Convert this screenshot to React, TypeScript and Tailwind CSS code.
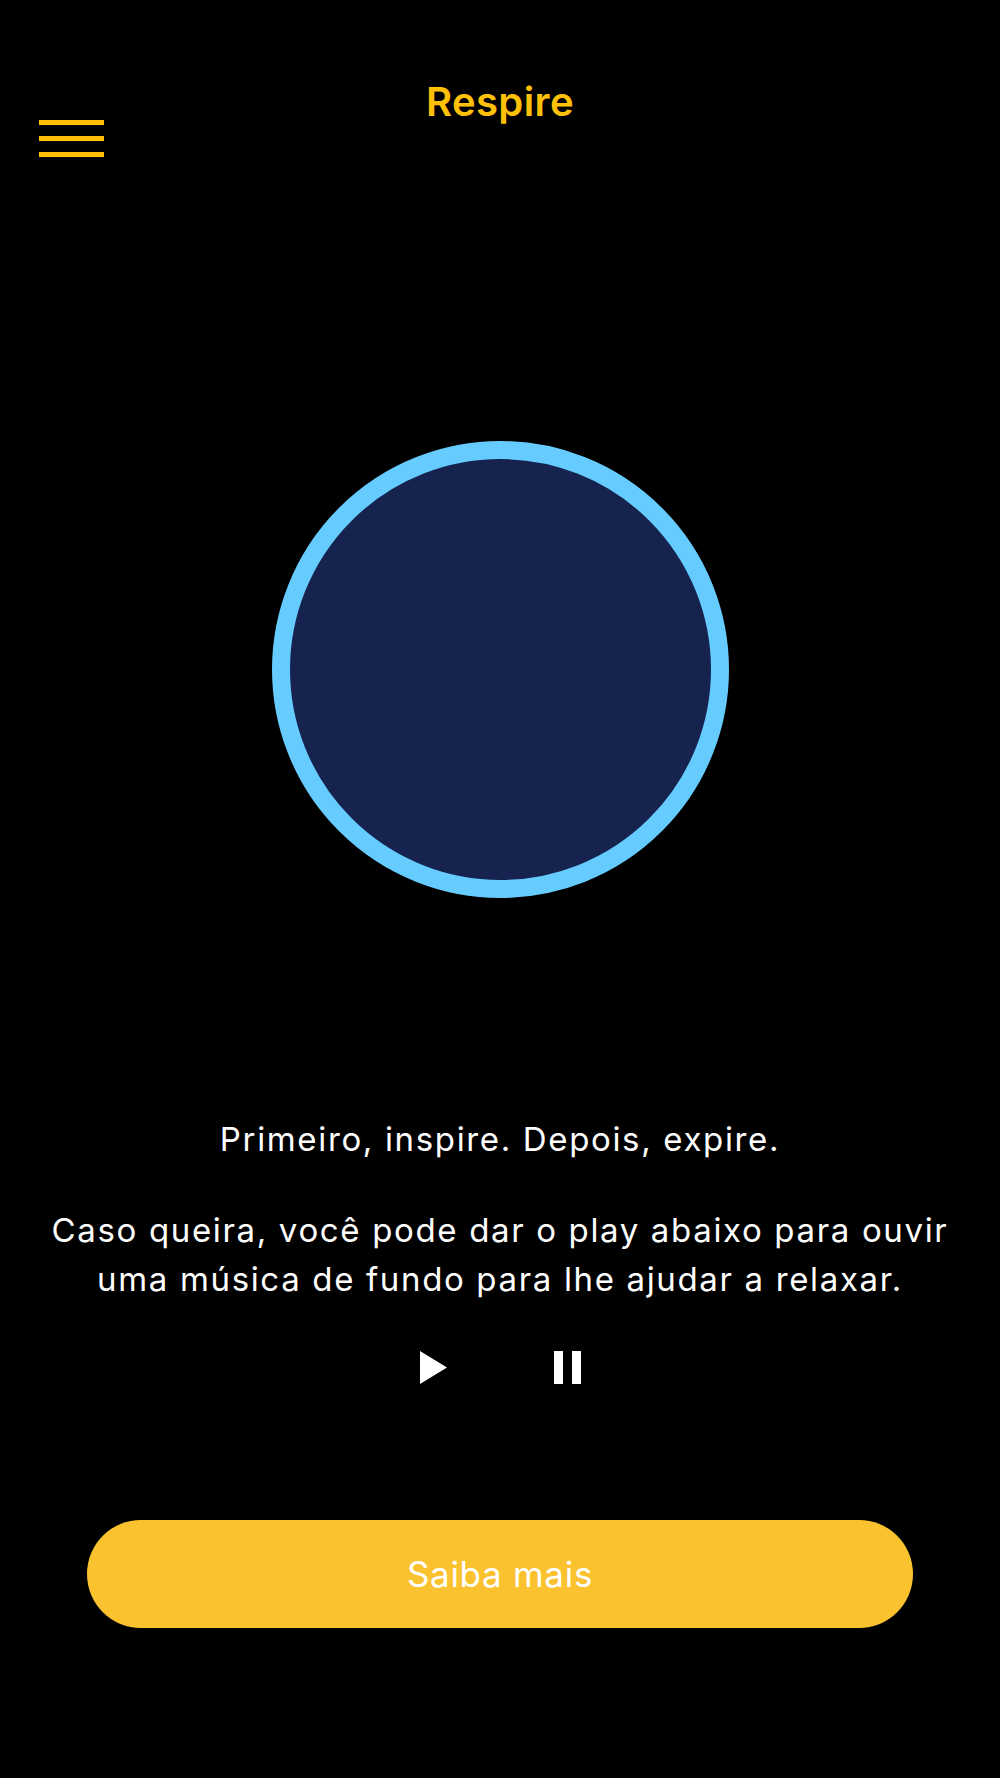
export default function App() {
  return (
    <div
      className="flex min-h-[1778px] w-full flex-col bg-black text-white"
      style={{ fontFamily: "Inter, 'Noto Sans', sans-serif" }}
    >
      <h1 className="pt-[82px] text-center text-[40px] font-semibold leading-[40px] tracking-[0.01em] text-[#FFC107]">
        Respire
      </h1>

      <button className="-mt-[2px] flex w-fit flex-col gap-[11px] pl-[39px]" aria-label="Menu">
        <span className="h-[5px] w-[65px] bg-[#FFC107]" />
        <span className="h-[5px] w-[65px] bg-[#FFC107]" />
        <span className="h-[5px] w-[65px] bg-[#FFC107]" />
      </button>

      <div className="mx-auto mt-[284px] h-[457px] w-[457px] rounded-full border-[18px] border-[#66CCFF] bg-[#16234F]" />

      <p className="mt-[221px] text-center text-[33px] leading-[40px] tracking-[0.05em]">
        Primeiro, inspire. Depois, expire.
      </p>
      <p className="mt-[47px] px-[30px] text-center text-[33px] leading-[48.5px] tracking-[0.05em]">
        Caso queira, você pode dar o play abaixo para ouvir uma música de fundo para lhe ajudar a relaxar.
      </p>

      <div className="mt-[48px] flex items-center justify-center gap-[107px] pl-[1px]">
        <svg width="27" height="33" viewBox="0 0 27 33" aria-label="Play">
          <path d="M0 0 L27 16.5 L0 33 Z" fill="white" />
        </svg>
        <svg width="27" height="33" viewBox="0 0 27 33" aria-label="Pause">
          <rect x="0" y="0" width="9" height="33" fill="white" />
          <rect x="18" y="0" width="9" height="33" fill="white" />
        </svg>
      </div>

      <button className="mx-[87px] mt-[136px] h-[108px] rounded-full bg-[#FBC22F] text-[35px] tracking-[0.02em] text-white">
        Saiba mais
      </button>
    </div>
  );
}
